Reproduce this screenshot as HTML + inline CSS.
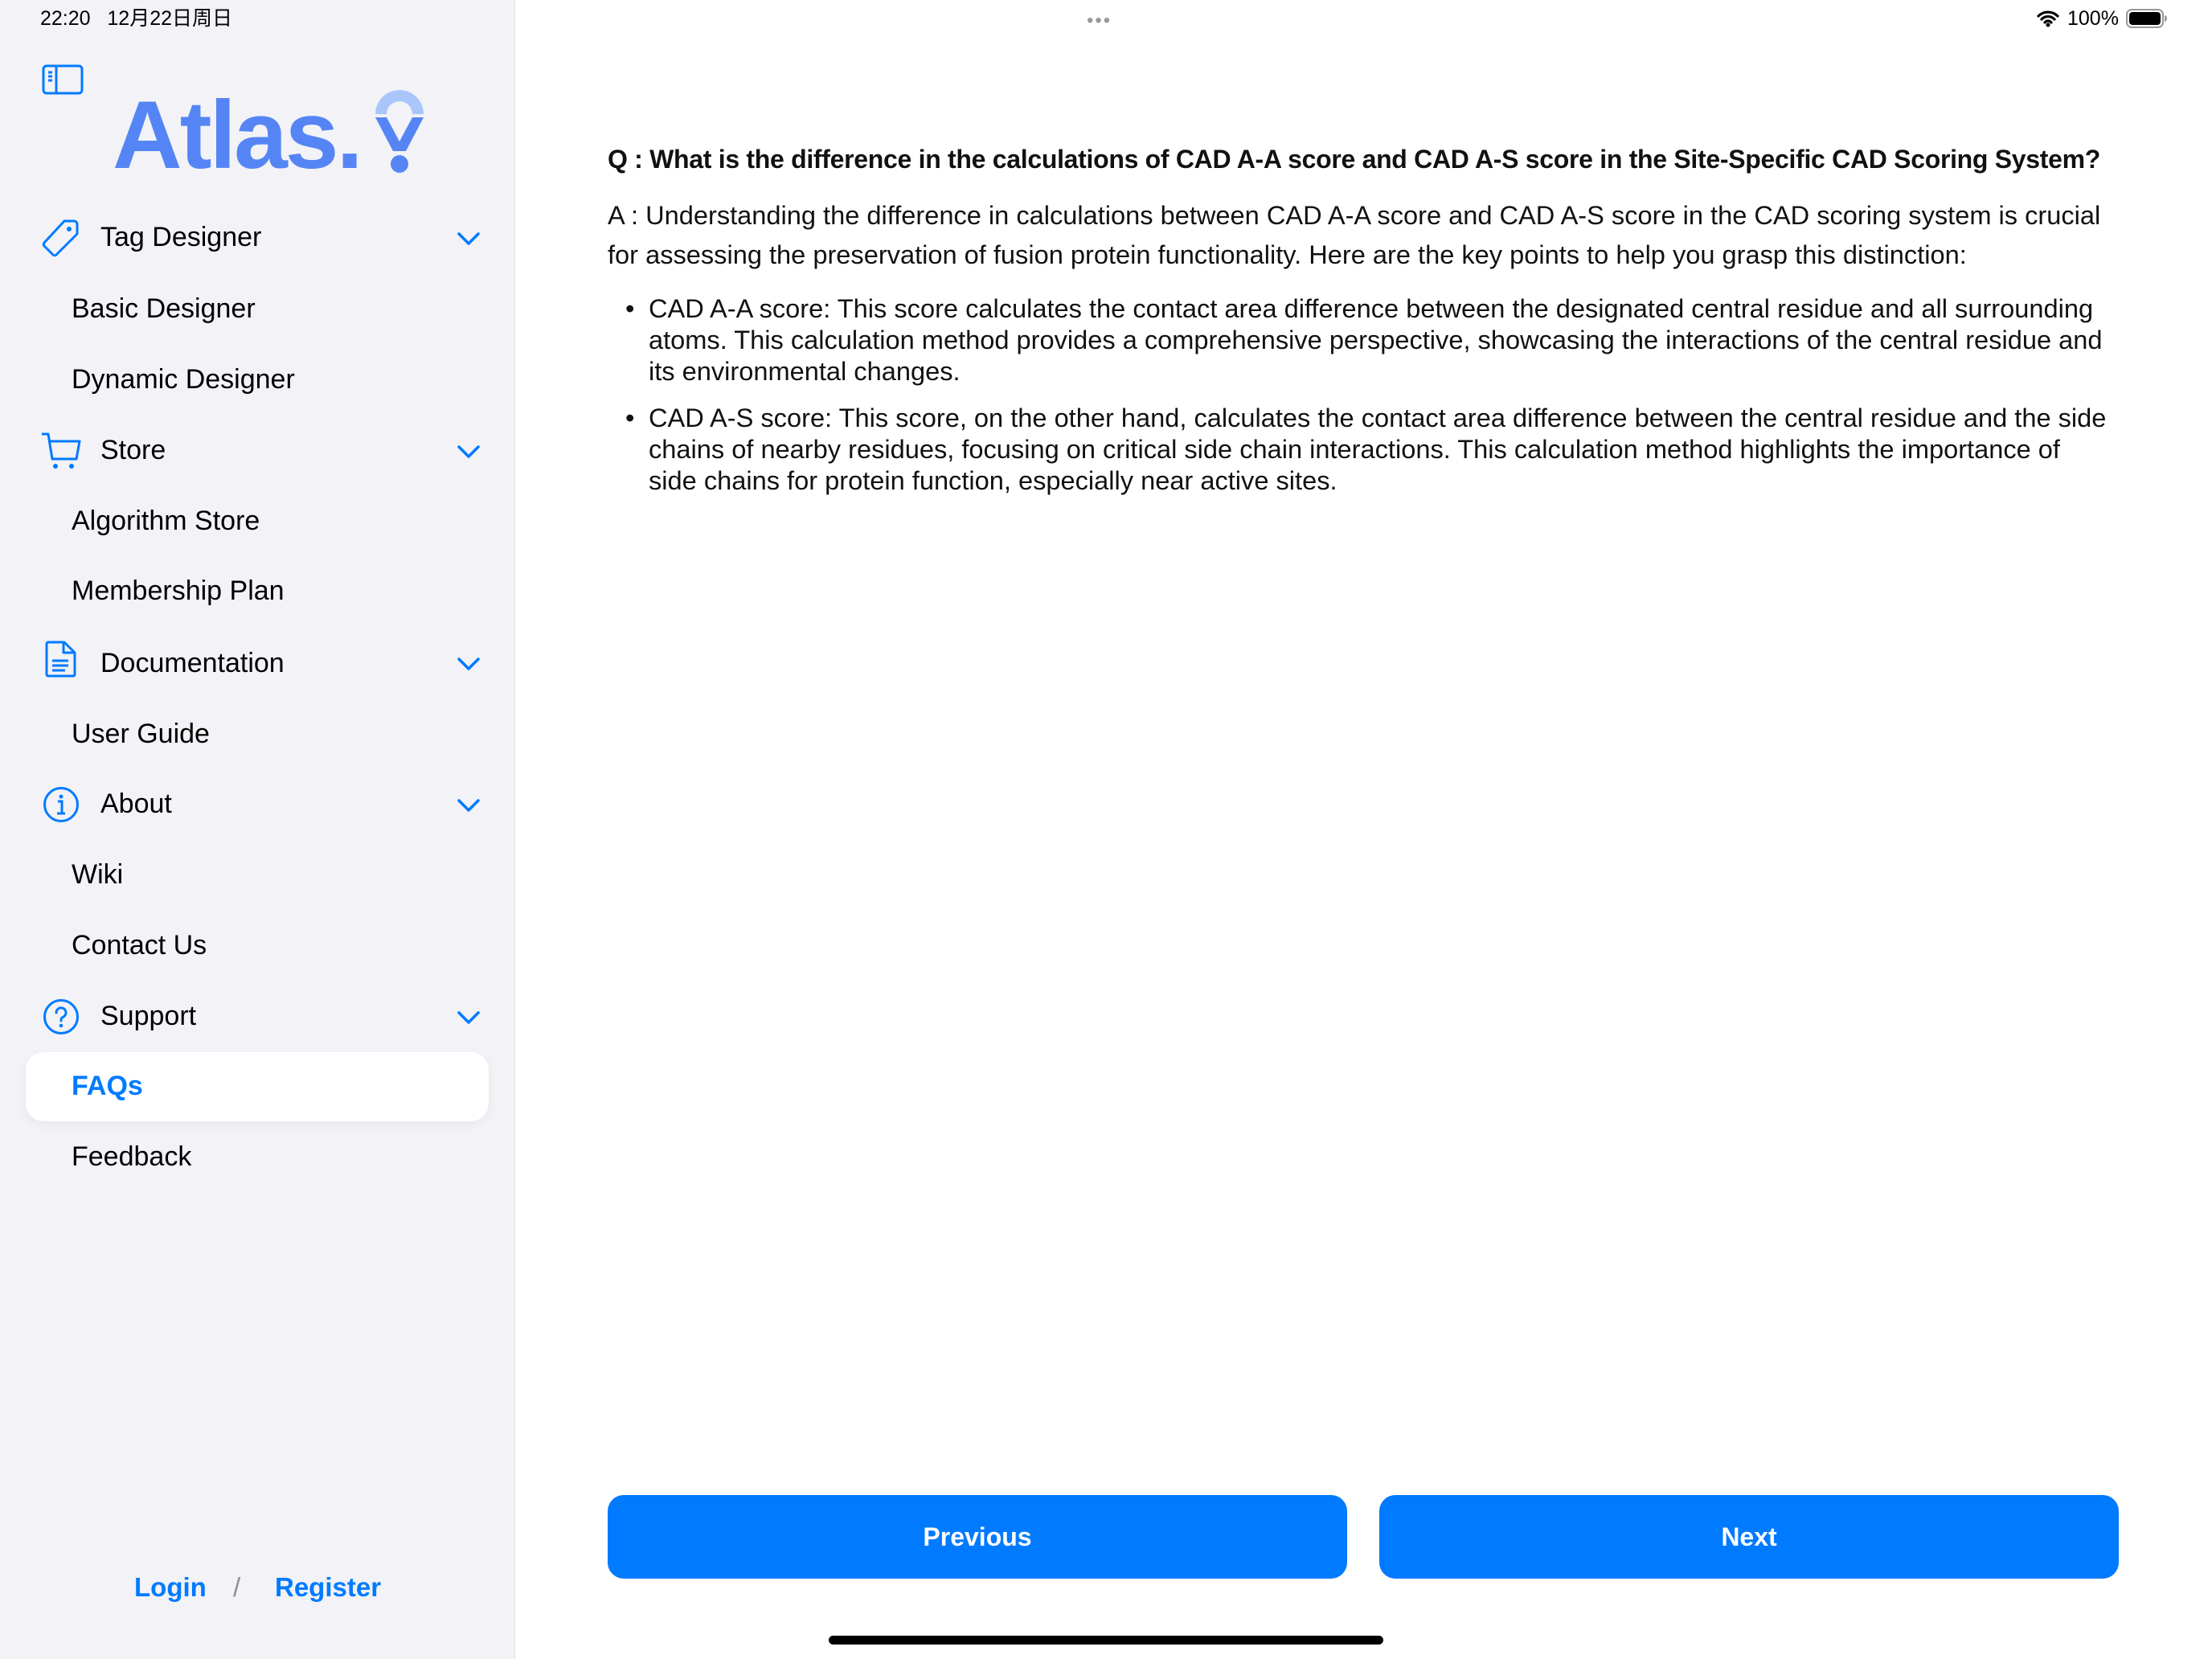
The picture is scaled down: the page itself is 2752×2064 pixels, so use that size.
<!DOCTYPE html>
<html><head><meta charset="utf-8"><style>
*{margin:0;padding:0;box-sizing:border-box}
body{width:2752px;height:2064px;position:relative;overflow:hidden;background:#fff;font-family:"Liberation Sans","Noto Sans CJK SC",sans-serif;color:#000}
.sb{position:absolute;left:0;top:0;width:641px;height:2064px;background:#f2f2f7;border-right:1px solid #e2e2e7}
.a{position:absolute;white-space:nowrap}
.it{position:absolute;font-size:34px;line-height:40px;white-space:nowrap}
.h{left:125px}.s{left:89px}
.chev{position:absolute;left:568px}
.ic{position:absolute;left:50px}
.p{position:absolute;left:756px;font-size:32.6px;white-space:nowrap;color:#111}
.btn{position:absolute;top:1860px;height:104px;width:920px;background:#007aff;border-radius:20px;color:#fff;font-size:32px;font-weight:bold;text-align:center;line-height:104px}
</style></head><body>
<div class="sb"></div>
<div class="a" style="left:50px;top:8px;font-size:25px;line-height:30px">22:20&nbsp;&nbsp;&nbsp;12月22日周日</div>
<div class="a" style="left:1352px;top:12px;font-size:24px;color:#999;letter-spacing:2px">•••</div>
<svg class="a" style="left:2534px;top:12px" width="28" height="22" viewBox="0 0 28 22"><path d="M2 8a17 17 0 0 1 24 0M6 12a11 11 0 0 1 16 0M10 16a5 5 0 0 1 8 0" stroke="#000" stroke-width="3.2" fill="none" stroke-linecap="round"/><circle cx="14" cy="19" r="2.5"/></svg>
<div class="a" style="left:2572px;top:8px;font-size:25px;line-height:30px">100%</div>
<svg class="a" style="left:2645px;top:11px" width="52" height="24" viewBox="0 0 52 24"><rect x="1" y="1" width="45" height="22" rx="6" fill="none" stroke="#999" stroke-width="2"/><rect x="4" y="4" width="39" height="16" rx="4" fill="#000"/><path d="M48 8v8c2 0 3-2 3-4s-1-4-3-4z" fill="#999"/></svg>
<svg class="a" style="left:52px;top:80px" width="52" height="38" viewBox="0 0 52 38"><rect x="2" y="2" width="48" height="34" rx="4" fill="none" stroke="#007aff" stroke-width="3"/><path d="M18 2v34M8 10h5M8 15h5M8 20h5" stroke="#007aff" stroke-width="3"/></svg>
<!-- logo -->
<div class="a" style="left:140px;top:98px;font-size:120px;font-weight:bold;color:#5585f5;line-height:140px;letter-spacing:-3px">Atlas.</div>
<svg class="a" style="left:465px;top:106px" width="64" height="114" viewBox="0 0 64 114"><path d="M2 36a30 30 0 0 1 60 0h-14a16 16 0 0 0-32 0z" fill="#a9c6fa"/><path d="M2 40h14l16 30 16-30h14l-22 42h-16z" fill="#5585f5"/><circle cx="32" cy="98" r="11" fill="#5585f5"/></svg>
<!-- menu -->
<svg class="ic" style="top:272px" width="50" height="50" viewBox="0 0 50 50"><path d="M30 3h12a4 4 0 0 1 4 4v12L20 45a3 3 0 0 1-4 0L5 34a3 3 0 0 1 0-4z" fill="none" stroke="#007aff" stroke-width="3" stroke-linejoin="round"/><circle cx="36" cy="13" r="3" fill="#007aff"/></svg>
<div class="it h" style="top:275px">Tag Designer</div>
<div class="it s" style="top:364px">Basic Designer</div>
<div class="it s" style="top:452px">Dynamic Designer</div>
<svg class="ic" style="top:537px" width="52" height="48" viewBox="0 0 52 48"><path d="M2 3h8l5 31h30l4-22H12" fill="none" stroke="#007aff" stroke-width="3" stroke-linejoin="round"/><circle cx="19" cy="43" r="3" fill="#007aff"/><circle cx="39" cy="43" r="3" fill="#007aff"/></svg>
<div class="it h" style="top:540px">Store</div>
<div class="it s" style="top:628px">Algorithm Store</div>
<div class="it s" style="top:715px">Membership Plan</div>
<svg class="ic" style="left:56px;top:797px" width="40" height="46" viewBox="0 0 40 46"><path d="M4 2h20l13 13v27a2 2 0 0 1-2 2H4a2 2 0 0 1-2-2V4a2 2 0 0 1 2-2zM23 2v13h14M9 25h20M9 31h20M9 37h16" fill="none" stroke="#007aff" stroke-width="3" stroke-linejoin="round"/></svg>
<div class="it h" style="top:805px">Documentation</div>
<div class="it s" style="top:893px">User Guide</div>
<svg class="ic" style="left:53px;top:978px" width="46" height="46" viewBox="0 0 46 46"><circle cx="23" cy="23" r="20.5" fill="none" stroke="#007aff" stroke-width="3"/><circle cx="23" cy="13" r="2.5" fill="#007aff"/><path d="M19 19h5v15M18 34h10" stroke="#007aff" stroke-width="3" fill="none"/></svg>
<div class="it h" style="top:980px">About</div>
<div class="it s" style="top:1068px">Wiki</div>
<div class="it s" style="top:1156px">Contact Us</div>
<svg class="ic" style="left:53px;top:1242px" width="46" height="46" viewBox="0 0 46 46"><circle cx="23" cy="23" r="20.5" fill="none" stroke="#007aff" stroke-width="3"/><path d="M17 18a6 6 0 1 1 8 5.5c-1.5.8-2 2-2 3.5v1" stroke="#007aff" stroke-width="3" fill="none" stroke-linecap="round"/><circle cx="23" cy="34" r="2.3" fill="#007aff"/></svg>
<div class="it h" style="top:1244px">Support</div>
<div class="a" style="left:32px;top:1309px;width:576px;height:86px;background:#fff;border-radius:22px;box-shadow:0 4px 14px rgba(0,0,0,0.05)"></div>
<div class="it s" style="top:1331px;color:#007aff;font-weight:bold">FAQs</div>
<div class="it s" style="top:1419px">Feedback</div>
<svg class="chev" style="top:288px" width="30" height="18" viewBox="0 0 30 18"><path d="M3 3l12 12L27 3" fill="none" stroke="#007aff" stroke-width="3.5" stroke-linecap="round" stroke-linejoin="round"/></svg>
<svg class="chev" style="top:553px" width="30" height="18" viewBox="0 0 30 18"><path d="M3 3l12 12L27 3" fill="none" stroke="#007aff" stroke-width="3.5" stroke-linecap="round" stroke-linejoin="round"/></svg>
<svg class="chev" style="top:817px" width="30" height="18" viewBox="0 0 30 18"><path d="M3 3l12 12L27 3" fill="none" stroke="#007aff" stroke-width="3.5" stroke-linecap="round" stroke-linejoin="round"/></svg>
<svg class="chev" style="top:993px" width="30" height="18" viewBox="0 0 30 18"><path d="M3 3l12 12L27 3" fill="none" stroke="#007aff" stroke-width="3.5" stroke-linecap="round" stroke-linejoin="round"/></svg>
<svg class="chev" style="top:1257px" width="30" height="18" viewBox="0 0 30 18"><path d="M3 3l12 12L27 3" fill="none" stroke="#007aff" stroke-width="3.5" stroke-linecap="round" stroke-linejoin="round"/></svg>
<div class="a" style="left:167px;top:1955px;font-size:33px;line-height:40px;color:#007aff;font-weight:bold">Login</div>
<div class="a" style="left:290px;top:1955px;font-size:33px;line-height:40px;color:#8e8e93">/</div>
<div class="a" style="left:342px;top:1955px;font-size:33px;line-height:40px;color:#007aff;font-weight:bold">Register</div>
<!-- content -->
<div class="p" style="top:180px;font-weight:bold;font-size:32px;line-height:36px;letter-spacing:-0.3px">Q : What is the difference in the calculations of CAD A-A score and CAD A-S score in the Site-Specific CAD Scoring System?</div>
<div class="p" style="top:243px;line-height:49px">A : Understanding the difference in calculations between CAD A-A score and CAD A-S score in the CAD scoring system is crucial<br>for assessing the preservation of fusion protein functionality. Here are the key points to help you grasp this distinction:</div>
<div class="p" style="left:778px;top:364px;line-height:39px">•</div>
<div class="p" style="left:807px;top:364px;line-height:39px">CAD A-A score: This score calculates the contact area difference between the designated central residue and all surrounding<br>atoms. This calculation method provides a comprehensive perspective, showcasing the interactions of the central residue and<br>its environmental changes.</div>
<div class="p" style="left:778px;top:500px;line-height:39px">•</div>
<div class="p" style="left:807px;top:500px;line-height:39px">CAD A-S score: This score, on the other hand, calculates the contact area difference between the central residue and the side<br>chains of nearby residues, focusing on critical side chain interactions. This calculation method highlights the importance of<br>side chains for protein function, especially near active sites.</div>
<div class="btn" style="left:756px">Previous</div>
<div class="btn" style="left:1716px">Next</div>
<div class="a" style="left:1031px;top:2035px;width:690px;height:11px;border-radius:6px;background:#000"></div>
</body></html>
